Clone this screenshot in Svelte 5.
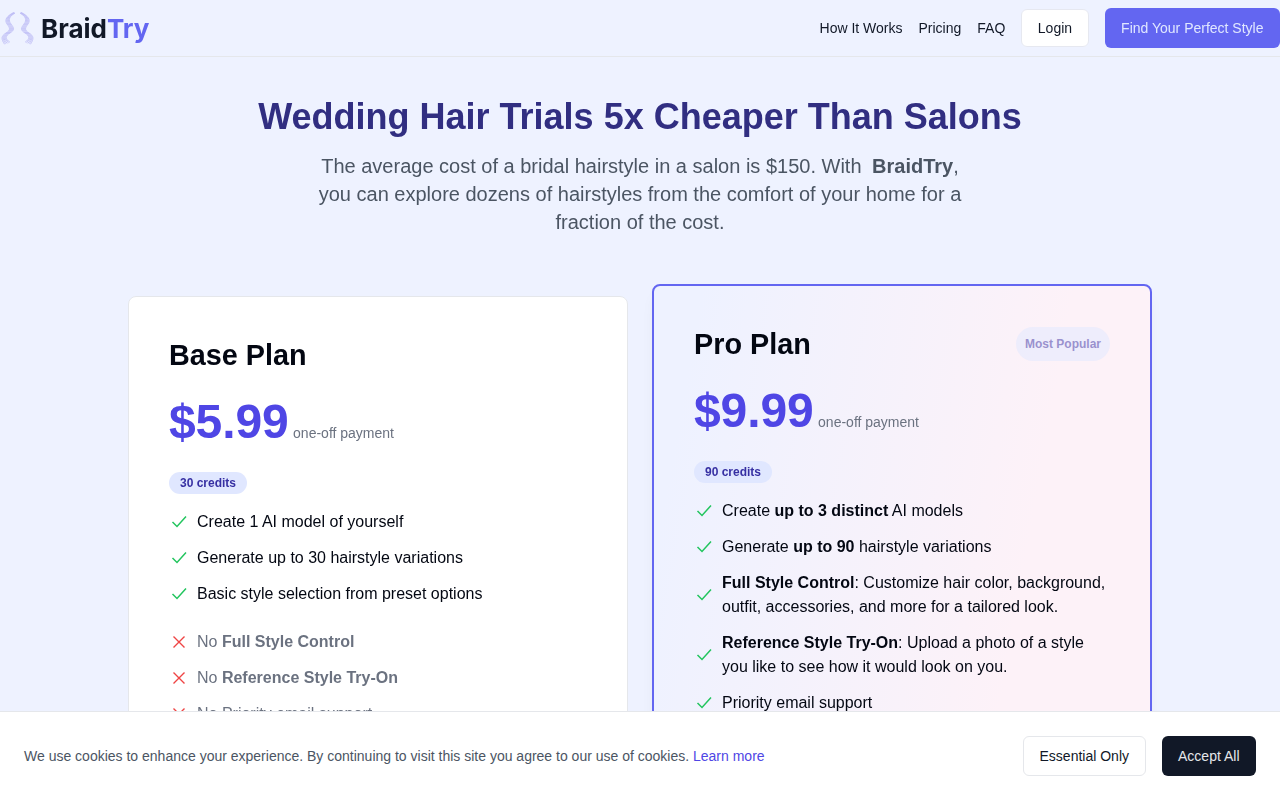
<script>
  const baseFeatures = [
    "Create 1 AI model of yourself",
    "Generate up to 30 hairstyle variations",
    "Basic style selection from preset options"
  ];

  // one lock of hair: the strands start together and fan out towards the tip
  const strand = (s) =>
    `M${14 + s * 0.3} ${5 + s * 0.2}C${8 + s * 0.7} 8 ${6 + s * 0.9} 12 ${9 + s} 16` +
    `C${12 + s} 20 ${13 + s} 22 ${8 + s} 25C${3 + s} 28 ${3 + s} 31 ${7 + s * 1.3} ${35 - s * 0.5}`;
  const strands = [-2, -1, 0, 1, 2].map(strand);
</script>

{#snippet check()}
  <svg class="ok" viewBox="0 0 20 20" fill="none" stroke="currentColor" stroke-width="1.5"><path d="M3.500 10l4.500 4.500 9-10" /></svg>
{/snippet}

{#snippet cross()}
  <svg class="no" viewBox="0 0 20 20" fill="none" stroke="currentColor" stroke-width="1.4"><path d="M4.500 4.500l11 11M15.500 4.500l-11 11" /></svg>
{/snippet}

<div class="page">
  <header>
    <a class="logo" href="#top">
      <svg width="36" height="40" viewBox="0 0 36 40" fill="none" stroke="#bdbbf5" stroke-width="0.8" stroke-linecap="round">
        {#each strands as d}
          <path {d} />
          <path {d} transform="matrix(-1 0 0 1 35 0)" />
        {/each}
      </svg>
      <span class="word">Braid<span class="try">Try</span></span>
    </a>
    <nav>
      <a href="#how">How It Works</a>
      <a href="#pricing">Pricing</a>
      <a href="#faq">FAQ</a>
      <button class="login">Login</button>
      <button class="cta">Find Your Perfect Style</button>
    </nav>
  </header>

  <main>
    <section class="hero">
      <h1>Wedding Hair Trials 5x Cheaper Than Salons</h1>
      <p>The average cost of a bridal hairstyle in a salon is $150. With <strong>BraidTry</strong>, you can explore dozens of hairstyles from the comfort of your home for a fraction of the cost.</p>
    </section>

    <section class="plans">
      <article class="card base">
        <h2>Base Plan</h2>
        <div class="price"><span class="amount">$5.99</span> <span class="once">one-off payment</span></div>
        <span class="credits">30 credits</span>
        <ul>
          {#each baseFeatures as f}
            <li>
              {@render check()}
              <span>{f}</span>
            </li>
          {/each}
        </ul>
        <ul class="missing">
          <li>
            {@render cross()}
            <span>No <b>Full Style Control</b></span>
          </li>
          <li>
            {@render cross()}
            <span>No <b>Reference Style Try-On</b></span>
          </li>
          <li>
            {@render cross()}
            <span>No Priority email support</span>
          </li>
        </ul>
      </article>

      <article class="card pro">
        <div class="head">
          <h2>Pro Plan</h2>
          <span class="popular">Most Popular</span>
        </div>
        <div class="price"><span class="amount">$9.99</span> <span class="once">one-off payment</span></div>
        <span class="credits">90 credits</span>
        <ul>
          <li>
            {@render check()}
            <span>Create <b>up to 3 distinct</b> AI models</span>
          </li>
          <li>
            {@render check()}
            <span>Generate <b>up to 90</b> hairstyle variations</span>
          </li>
          <li>
            {@render check()}
            <span><b>Full Style Control</b>: Customize hair color, background, outfit, accessories, and more for a tailored look.</span>
          </li>
          <li>
            {@render check()}
            <span><b>Reference Style Try-On</b>: Upload a photo of a style you like to see how it would look on you.</span>
          </li>
          <li>
            {@render check()}
            <span>Priority email support</span>
          </li>
        </ul>
      </article>
    </section>
  </main>

  <aside class="cookies">
    <p>We use cookies to enhance your experience. By continuing to visit this site you agree to our use of cookies. <a href="#privacy">Learn more</a></p>
    <div class="actions">
      <button class="essential">Essential Only</button>
      <button class="accept">Accept All</button>
    </div>
  </aside>
</div>

<style>
  :global(body) {
    margin: 0;
    background: #eef2ff;
    font-family: "Liberation Sans", Arial, sans-serif;
    overflow: hidden;
  }

  .page {
    height: 800px;
    overflow: hidden;
    will-change: opacity;
  }

  header {
    height: 56px;
    display: flex;
    align-items: center;
    justify-content: space-between;
    border-bottom: 1px solid #e5e7eb;
  }

  .logo {
    display: flex;
    align-items: center;
    gap: 5px;
    text-decoration: none;
  }

  .word {
    font-family: Inter, sans-serif;
    font-weight: 700;
    font-size: 26px;
    color: #111827;
  }

  .try {
    color: #6366f1;
  }

  nav {
    display: flex;
    align-items: center;
    gap: 16px;
    font-size: 14px;
  }

  nav a {
    color: #111827;
    text-decoration: none;
  }

  button {
    font-family: inherit;
    font-size: 14px;
    cursor: pointer;
  }

  .login {
    height: 38px;
    padding: 0 15.500px;
    background: #fff;
    border: 1px solid #e6e8f0;
    border-radius: 6px;
    color: #111827;
  }

  .cta {
    height: 40px;
    padding: 0 16.500px;
    background: #6366f1;
    border: none;
    border-radius: 6px;
    color: #e0e7ff;
  }

  main {
    width: 1024px;
    margin: 0 auto;
  }

  .hero {
    padding-top: 40px;
    text-align: center;
  }

  h1 {
    margin: 0;
    font-size: 36px;
    line-height: 40px;
    font-weight: 700;
    color: #312e81;
  }

  .hero p {
    width: 672px;
    margin: 15px auto 0;
    font-size: 20px;
    line-height: 28px;
    color: #4b5563;
  }

  .hero strong {
    margin-left: 5px;
  }

  .plans {
    display: grid;
    grid-template-columns: 500px 500px;
    gap: 24px;
    margin-top: 48px;
  }

  .card {
    box-sizing: border-box;
    height: 600px;
    border-radius: 8px;
  }

  .base {
    margin-top: 12px;
    padding: 40px;
    background: #fff;
    border: 1px solid #e5e7eb;
  }

  .pro {
    padding: 40px;
    background: linear-gradient(100deg, #eef2ff 8%, #fdf2f8 70%);
    border: 2px solid #6366f1;
    box-shadow: 0 10px 15px -3px rgba(0, 0, 0, 0.05);
  }

  .head {
    display: flex;
    align-items: center;
    justify-content: space-between;
  }

  h2 {
    margin: 0;
    font-size: 28.800px;
    line-height: 36px;
    font-weight: 700;
    color: #030712;
  }

  .popular {
    padding: 10px 9px;
    border-radius: 999px;
    background: #e0e7ff;
    color: #3730a3;
    opacity: 0.5;
    font-size: 12px;
    line-height: 14px;
    font-weight: 700;
  }

  .price {
    margin-top: 25px;
    line-height: 48px;
  }

  .amount {
    font-size: 48px;
    font-weight: 700;
    letter-spacing: -0.1px;
    color: #4f46e5;
  }

  .once {
    font-size: 14px;
    color: #6b7280;
  }

  .credits {
    display: block;
    width: fit-content;
    margin-top: 15px;
    padding: 3px 11px;
    border-radius: 999px;
    background: #e0e7ff;
    color: #3730a3;
    font-size: 12px;
    line-height: 16px;
    font-weight: 700;
  }

  ul {
    list-style: none;
    margin: 16px 0 0;
    padding: 0;
    display: flex;
    flex-direction: column;
    gap: 12px;
  }

  li {
    display: flex;
    align-items: center;
    gap: 8px;
    font-size: 16px;
    line-height: 24px;
    color: #030712;
  }

  li svg {
    width: 20px;
    height: 20px;
    flex: none;
  }

  .ok {
    color: #22c55e;
  }

  .no {
    color: #ef4444;
  }

  .missing {
    margin-top: 24px;
  }

  .missing li {
    color: #6b7280;
  }

  .cookies {
    position: fixed;
    left: 0;
    right: 0;
    bottom: 0;
    height: 89px;
    padding: 0 24px;
    box-sizing: border-box;
    display: flex;
    align-items: center;
    justify-content: space-between;
    background: #fff;
    border-top: 1px solid #e5e7eb;
  }

  .cookies p {
    margin: 0;
    font-size: 14px;
    color: #4b5563;
  }

  .cookies a {
    color: #4f46e5;
    text-decoration: none;
  }

  .actions {
    display: flex;
    gap: 16px;
  }

  .essential {
    height: 40px;
    padding: 0 15.500px;
    background: #fff;
    border: 1px solid #e5e7eb;
    border-radius: 6px;
    color: #111827;
  }

  .accept {
    height: 40px;
    padding: 0 16.500px;
    background: #111827;
    border: none;
    border-radius: 6px;
    color: #e5e7eb;
  }
</style>
